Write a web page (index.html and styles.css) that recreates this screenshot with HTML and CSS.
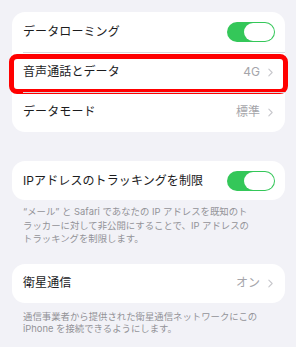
FILE: index.html
```html
<!DOCTYPE html>
<html lang="ja">
<head>
<meta charset="utf-8">
<link rel="stylesheet" href="styles.css">
</head>
<body>
<div class="page">
  <div class="card first">
    <div class="row">
      <span class="label">データローミング</span>
      <span class="toggle on"><span class="knob"></span></span>
    </div>
    <div class="row sep highlight">
      <span class="label">音声通話とデータ</span>
      <span class="value">4G<svg class="chev" viewBox="0 0 6 10" width="6" height="10"><path d="M1 1l4 4-4 4" fill="none" stroke="currentColor" stroke-width="1.3" stroke-linecap="round" stroke-linejoin="round"/></svg></span>
      <span class="mark"></span>
    </div>
    <div class="row sep">
      <span class="label">データモード</span>
      <span class="value">標準<svg class="chev" viewBox="0 0 6 10" width="6" height="10"><path d="M1 1l4 4-4 4" fill="none" stroke="currentColor" stroke-width="1.3" stroke-linecap="round" stroke-linejoin="round"/></svg></span>
    </div>
  </div>

  <div class="card second">
    <div class="row">
      <span class="label">IPアドレスのトラッキングを制限</span>
      <span class="toggle on"><span class="knob"></span></span>
    </div>
  </div>
  <p class="note">“メール” と Safari であなたの IP アドレスを既知のト<br>ラッカーに対して非公開にすることで、IP アドレスの<br>トラッキングを制限します。</p>

  <div class="card third">
    <div class="row">
      <span class="label">衛星通信</span>
      <span class="value">オン<svg class="chev" viewBox="0 0 6 10" width="6" height="10"><path d="M1 1l4 4-4 4" fill="none" stroke="currentColor" stroke-width="1.3" stroke-linecap="round" stroke-linejoin="round"/></svg></span>
    </div>
  </div>
  <p class="note second-note">通信事業者から提供された衛星通信ネットワークにこの<br>iPhone を接続できるようにします。</p>
</div>
</body>
</html>
```

FILE: styles.css
```css
html, body {
  margin: 0;
  padding: 0;
  background: #f2f2f7;
}
body {
  font-family: "Inter", "Noto Sans CJK JP", sans-serif;
  color: #1c1c1e;
  width: 296px;
  height: 347px;
  overflow: hidden;
}
.page {
  padding: 12px 11px 0 12px;
  display: flex;
  flex-direction: column;
}
.card {
  background: #ffffff;
  border-radius: 13px;
}
.card.second {
  margin-top: 29px;
}
.card.third {
  margin-top: 18px;
}
.row {
  position: relative;
  height: 40px;
  display: flex;
  align-items: center;
  justify-content: space-between;
  padding: 0 10px 0 11px;
}
.card.second .row,
.card.third .row {
  height: 39px;
}
.row.sep::before {
  content: "";
  position: absolute;
  left: 11px;
  right: 0;
  top: 0;
  height: 0.5px;
  background: #d8d8dc;
}
.label {
  font-size: 12px;
  letter-spacing: 0.1px;
  line-height: 1;
}
.value {
  display: flex;
  align-items: center;
  gap: 8px;
  font-size: 12px;
  color: #a5a5aa;
  padding-right: 2px;
  line-height: 1;
}
.chev {
  color: #c7c7cc;
  width: 5px;
  height: 9px;
}
.toggle {
  width: 48px;
  height: 20px;
  border-radius: 10px;
  background: #34c759;
  position: relative;
  display: block;
}
.knob {
  position: absolute;
  right: 1px;
  top: 1px;
  width: 30px;
  height: 18px;
  border-radius: 9px;
  background: #ffffff;
}
.mark {
  position: absolute;
  left: -3px;
  right: -3px;
  top: 2px;
  bottom: -2px;
  border: 5px solid #ff0000;
  border-radius: 8px;
  box-sizing: border-box;
}
.note {
  margin: 0;
  padding: 5px 11px 0 11px;
  font-size: 9.4px;
  line-height: 13.5px;
  color: #939398;
}
.note.second-note {
  padding-top: 8px;
  line-height: 12px;
}
```
